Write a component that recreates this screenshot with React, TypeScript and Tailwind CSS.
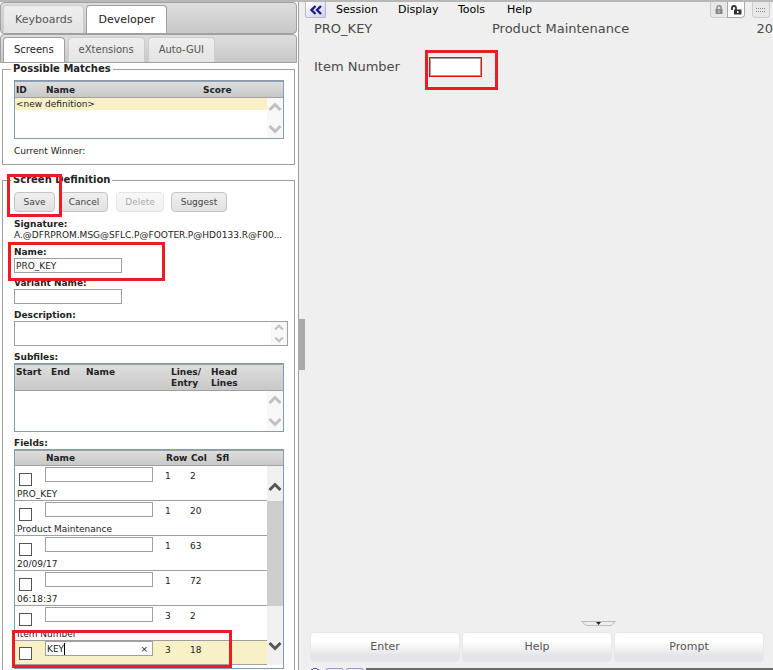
import type { ReactNode } from "react";

type Field = {
  label: string
  row: number
  col: number
}

const fields: Field[] = [
  { label: "PRO_KEY", row: 1, col: 2 },
  { label: "Product Maintenance", row: 1, col: 20 },
  { label: "20/09/17", row: 1, col: 63 },
  { label: "06:18:37", row: 1, col: 72 },
  { label: "Item Number", row: 3, col: 2 },
];

const inputClass = "block h-[15px] w-[108px] border border-[#a0a0a0] bg-white px-px text-[9px] leading-3 text-[#222] outline-none";
const headClass = "border-y border-[#a0a0a0] bg-linear-to-b from-[#dedede] to-[#c8c8c8] pl-px text-left align-top font-bold";

const Chevron = ({ down = false, dark = false, small = false }: { down?: boolean; dark?: boolean; small?: boolean }) => (
  <svg
    width={small ? 10 : 14}
    height={small ? 7 : 10}
    viewBox="0 0 14 10"
    fill="none"
    stroke={dark ? "#555" : "#c0c0c0"}
    strokeWidth="3"
    className="shrink-0"
  >
    <path d={down ? "M1.5 2 L7 7.5 L12.5 2" : "M1.5 8 L7 2.5 L12.5 8"} />
  </svg>
);

const IdleScrollbar = () => (
  <div className="flex h-10 w-4 flex-col items-center justify-between bg-[#f8f8f8] py-1">
    <Chevron />
    <Chevron down />
  </div>
);

// Red marker drawn over the control it points at
const Mark = ({ className }: { className: string }) => (
  <span className={`pointer-events-none absolute z-10 border-3 border-[#ed1c24] ${className}`} />
);

const Tab = ({ active = false, small = false, children }: { active?: boolean; small?: boolean; children: ReactNode }) => (
  <button
    type="button"
    role="tab"
    aria-selected={active}
    className={`rounded-t-[4px] border border-b-0 ${small ? "h-[25px] px-[10px] text-[10px]" : "h-7 px-[11px] text-[11px]"} ${
      active ? "border-[#a0a0a0] bg-white text-[#222]" : "border-[#ccc] bg-linear-to-b from-[#eee] to-[#e4e4e4] text-[#555]"
    }`}
  >
    {children}
  </button>
);

const PanelButton = ({ disabled = false, className, children }: { disabled?: boolean; className: string; children: ReactNode }) => (
  <button
    type="button"
    disabled={disabled}
    className={`h-5 rounded-[4px] border border-[#c4c4c4] bg-linear-to-b from-[#efefef] to-[#e2e2e2] text-[9px] text-[#444] disabled:opacity-45 ${className}`}
  >
    {children}
  </button>
);

const PossibleMatches = () => (
  <fieldset className="ml-[2px] h-[102px] w-[293px] border border-[#a0a0a0] pl-[11px]">
    <legend className="-ml-[3px] px-[2px] text-[10px] leading-3 font-bold">Possible Matches</legend>
    <div className="mt-[5px] h-[59px] w-[270px] border border-[#7f9db9]">
      <table className="w-full table-fixed border-separate border-spacing-0">
        <thead>
          <tr className="h-[17px]">
            <th className={`w-[30px] pt-[2px] ${headClass}`}>ID</th>
            <th className={`w-[157px] pt-[2px] ${headClass}`}>Name</th>
            <th className={`pt-[2px] ${headClass}`}>Score</th>
            <th className={`w-4 ${headClass}`}></th>
          </tr>
        </thead>
        <tbody>
          <tr className="h-3">
            <td colSpan={3} className="bg-[#f9f1c6] pl-px">&lt;new definition&gt;</td>
            <td rowSpan={2} className="p-0"><IdleScrollbar /></td>
          </tr>
          <tr className="h-7"><td colSpan={3}></td></tr>
        </tbody>
      </table>
    </div>
    <p className="mt-[6px]">Current Winner:</p>
  </fieldset>
);

const Subfiles = () => (
  <div className="h-[69px] w-[270px] border border-[#7f9db9]">
    <table className="w-full table-fixed border-separate border-spacing-0">
      <thead>
        <tr className="h-[27px] leading-[11px]">
          <th className={`w-[35px] pt-[2px] ${headClass}`}>Start</th>
          <th className={`w-[35px] pt-[2px] ${headClass}`}>End</th>
          <th className={`w-[85px] pt-[2px] ${headClass}`}>Name</th>
          <th className={`w-[40px] pt-[2px] ${headClass}`}>Lines/<br />Entry</th>
          <th className={`pt-[2px] ${headClass}`}>Head<br />Lines</th>
          <th className={`w-4 ${headClass}`}></th>
        </tr>
      </thead>
      <tbody>
        <tr>
          <td colSpan={5}></td>
          <td className="p-0"><IdleScrollbar /></td>
        </tr>
      </tbody>
    </table>
  </div>
);

const Fields = () => (
  <div className="relative h-[220px] w-[270px] border border-[#7f9db9]">
    <table className="w-full table-fixed border-separate border-spacing-0">
      <thead>
        <tr className="h-4">
          <th className={`w-[30px] ${headClass}`}></th>
          <th className={`w-[120px] pt-px ${headClass}`}>Name</th>
          <th className={`w-[25px] pt-px ${headClass}`}>Row</th>
          <th className={`w-[25px] pt-px ${headClass}`}>Col</th>
          <th className={`pt-px ${headClass}`}>Sfl</th>
          <th className={`w-4 ${headClass}`}></th>
        </tr>
      </thead>
      {fields.map((field, i) => (
        <tbody key={field.label}>
          <tr className="h-[22px] align-top">
            <td className="pt-[7px] pl-1">
              <input type="checkbox" aria-label={`Select ${field.label}`} className="block size-[13px] appearance-none border border-[#555] bg-white" />
            </td>
            <td className="pt-px"><input type="text" aria-label={`${field.label} name`} className={inputClass} /></td>
            <td className="pt-[4px]">{field.row}</td>
            <td className="pt-[4px]">{field.col}</td>
            <td></td>
            {i === 0 && <td rowSpan={2} className="bg-[#f0f0f0] pt-4 pl-px"><Chevron dark /></td>}
            {i > 0 && i < 4 && <td rowSpan={2} className="bg-[#cdcdcd]"></td>}
            {i === 4 && <td rowSpan={2} className="bg-[#f0f0f0]"></td>}
          </tr>
          <tr className="h-[13px]">
            <td colSpan={5} className="border-b border-[#a0a0a0] pl-[2px]">{field.label}</td>
          </tr>
        </tbody>
      ))}
      <tbody>
        <tr className="h-6 bg-[#f9f1c6] align-top">
          <td className="border-b border-[#a0a0a0] pt-[6px] pl-1">
            <input type="checkbox" aria-label="Select KEY" className="block size-[13px] appearance-none border border-[#555] bg-white" />
          </td>
          <td className="border-b border-[#a0a0a0]">
            <div className="flex h-[15px] w-[108px] items-center border border-[#a0a0a0] bg-white">
              <input type="text" aria-label="Field name" defaultValue="KEY" size={3} className="h-3 w-[19px] border-r border-black pl-px text-[9px] outline-none" />
              <button type="button" aria-label="Clear" className="ml-auto px-1 text-[9px] leading-3">×</button>
            </div>
          </td>
          <td className="border-b border-[#a0a0a0] pt-[3px]">3</td>
          <td className="border-b border-[#a0a0a0] pt-[3px]">18</td>
          <td className="border-b border-[#a0a0a0]"></td>
          <td className="bg-[#f0f0f0] pl-px"><Chevron down dark /></td>
        </tr>
      </tbody>
    </table>
    <Mark className="bottom-0 -left-[3px] h-[38px] w-[220px]" />
  </div>
);

const ScreenDefinition = () => (
  <fieldset className="mt-[9px] ml-[2px] h-[520px] w-[293px] border border-[#a0a0a0] pl-[11px]">
    <legend className="-ml-[3px] px-[2px] text-[10px] leading-3 font-bold">Screen Definition</legend>
    <div className="mt-[6px] flex">
      <div className="relative">
        <PanelButton className="w-[41px]">Save</PanelButton>
        <Mark className="-top-[18px] -left-[7px] h-[43px] w-[55px]" />
      </div>
      <PanelButton className="ml-[5px] w-12">Cancel</PanelButton>
      <PanelButton className="ml-2 w-12" disabled>Delete</PanelButton>
      <PanelButton className="ml-[7px] w-14">Suggest</PanelButton>
    </div>
    <p className="mt-[7px] leading-[11px] font-bold">Signature:</p>
    <p className="w-[270px] leading-[11px] whitespace-nowrap">A.@DFRPROM.MSG@SFLC.P@FOOTER.P@HD0133.R@F00...</p>
    <div className="relative mt-[6px]">
      <label htmlFor="name" className="block leading-[11px] font-bold">Name:</label>
      <input id="name" type="text" defaultValue="PRO_KEY" className={inputClass} />
      <Mark className="-top-[5px] -left-[6px] h-[39px] w-[157px]" />
    </div>
    <label htmlFor="variant" className="mt-[4px] block leading-3 font-bold">Variant Name:</label>
    <input id="variant" type="text" className={inputClass} />
    <label htmlFor="description" className="mt-[5px] block leading-3 font-bold">Description:</label>
    <div className="flex h-[25px] w-[274px] border border-[#a0a0a0]">
      <textarea id="description" className="min-w-0 flex-1 resize-none outline-none" />
      <div className="flex w-4 flex-col items-center justify-between bg-[#f8f8f8] py-[2px]">
        <Chevron small />
        <Chevron small down />
      </div>
    </div>
    <p className="mt-[5px] font-bold">Subfiles:</p>
    <Subfiles />
    <p className="mt-[5px] font-bold">Fields:</p>
    <Fields />
  </fieldset>
);

const DeveloperPanel = () => (
  <aside className="w-[298px] shrink-0 bg-white text-[9px] leading-3 text-[#222]">
    <div role="tablist" className="mr-px flex h-8 items-end gap-[2px] rounded-[4px] border border-[#a0a0a0] bg-linear-to-b from-[#dedede] to-[#c8c8c8] pl-[2px]">
      <Tab>Keyboards</Tab>
      <Tab active>Developer</Tab>
    </div>
    <div role="tablist" className="mr-px flex h-[29px] items-end gap-[3px] rounded-t-[4px] border border-[#a0a0a0] bg-linear-to-b from-[#dedede] to-[#c8c8c8] pl-[2px]">
      <Tab small active>Screens</Tab>
      <Tab small>eXtensions</Tab>
      <Tab small>Auto-GUI</Tab>
    </div>
    <PossibleMatches />
    <ScreenDefinition />
  </aside>
);

const SessionView = () => (
  <main className="flex min-w-0 flex-1 flex-col overflow-hidden bg-[#efefef] text-[13px] text-[#4a4a4a]">
    <nav className="flex h-4 shrink-0 items-center pl-[6px] text-[11px] text-black">
      <button type="button" aria-label="Collapse panel" className="flex h-4 w-[21px] items-center justify-center rounded-b-[2px] border border-t-0 border-[#b8b8c8] bg-linear-to-br from-white to-[#d0d0ea]">
        <svg width="14" height="10" viewBox="0 0 14 10" fill="none" stroke="#1c1c8c" strokeWidth="2.4">
          <path d="M6.5 1 L2.5 5 L6.5 9 M12 1 L8 5 L12 9" />
        </svg>
      </button>
      <button type="button" className="ml-[10px] w-[62px] text-left">Session</button>
      <button type="button" className="w-[60px] text-left">Display</button>
      <button type="button" className="w-[49px] text-left">Tools</button>
      <button type="button">Help</button>
      <button type="button" aria-label="Lock" className="ml-auto flex h-4 w-[17px] items-center justify-center rounded-bl-[4px] border border-t-0 border-r-0 border-[#ccc] bg-[#e8e8e8]">
        <svg width="8" height="9" viewBox="0 0 8 9">
          <path d="M2 4 V2.5 Q2 .8 4 .8 Q6 .8 6 2.5 V4" fill="none" stroke="#888" strokeWidth="1.5" />
          <path d="M.5 4 H7.5 V9 H.5 Z M3.5 5.5 V7.5 H4.5 V5.5 Z" fill="#888" fillRule="evenodd" />
        </svg>
      </button>
      <button type="button" aria-label="Unlock" className="flex h-4 w-[18px] items-center justify-center rounded-br-[4px] border border-t-0 border-[#aaa] bg-white">
        <svg width="11" height="10" viewBox="0 0 11 10">
          <path d="M1 5 V3 Q1 1 3 1 Q5 1 5 3 V5" fill="none" stroke="#333" strokeWidth="1.8" />
          <path d="M3 4.5 H10.5 V9.5 H3 Z M6 6 V8 H7.5 V6 Z" fill="#333" fillRule="evenodd" />
        </svg>
      </button>
      <button type="button" aria-label="Keypad" className="mr-[3px] ml-[7px] flex h-4 w-[18px] items-center justify-center rounded-b-[4px] border border-t-0 border-[#ccc] bg-[#e8e8e8]">
        <svg width="10" height="4" viewBox="0 0 10 4" stroke="#888" strokeDasharray="1 1">
          <path d="M0 .5 H10 M0 3.5 H10" />
        </svg>
      </button>
    </nav>
    <div className="flex h-[22px] shrink-0 items-center pl-[15px] whitespace-nowrap">
      <span className="w-[178px] shrink-0">PRO_KEY</span>
      <span className="shrink-0">Product Maintenance</span>
      <span className="ml-auto">20</span>
    </div>
    <div className="mt-[15px] flex h-6 shrink-0 items-center pl-[15px]">
      <label htmlFor="item" className="w-[115px]">Item Number</label>
      <div className="relative">
        <input id="item" type="text" className="block h-5 w-[53px] border border-[#f00] bg-white inset-ring inset-ring-[#a0a0a0] outline-none" />
        <Mark className="-top-[7px] -left-[4px] h-10 w-[73px]" />
      </div>
    </div>
    <div className="mt-auto flex shrink-0 justify-center pl-[124px]">
      <svg width="35" height="6" viewBox="0 0 35 6">
        <path d="M.5 .5 H34.5 L30 4.5 H5 Z" fill="#eee" stroke="#bbb" />
        <path d="M15 1 H20 L17.5 4 Z" fill="#222" />
      </svg>
    </div>
    <div className="mt-[5px] mr-[9px] ml-[11px] flex shrink-0 gap-[2px] text-[11px]">
      {["Enter", "Help", "Prompt"].map((label) => (
        <button key={label} type="button" className="h-[30px] flex-1 rounded-[4px] border border-[#e6e7ea] bg-linear-to-b from-white from-30% to-[#e4e5e8] to-80% text-[#555]">
          {label}
        </button>
      ))}
    </div>
    <div className="mt-[6px] flex h-[2px] shrink-0 items-start pl-[12px]">
      <svg width="53" height="2" viewBox="0 0 53 2" fill="none" stroke="#9a9ad0">
        <path d="M0 1.5 H2 M2 .5 H6 M6 1.5 H8" stroke="#5555b0" />
        <path d="M15.5 2 V1 L16 .5 H31 L32 1 V2 M35.5 2 V1 L36 .5 H51 L52 1 V2" />
      </svg>
      <div className="ml-[2px] h-[2px] flex-1 bg-[#6a6a6a]" />
    </div>
  </main>
);

const App = () => {
  return (
    <div className="flex h-screen overflow-hidden border-t-2 border-[#b8b8b8] bg-white font-['DejaVu_Sans',sans-serif]">
      <DeveloperPanel />
      <div className="relative w-px shrink-0 bg-[#a0a0a0]">
        <span className="absolute top-[317px] left-0 z-10 h-[51px] w-[7px] bg-[#a9a9a9]" />
      </div>
      <SessionView />
    </div>
  );
}

export default App
